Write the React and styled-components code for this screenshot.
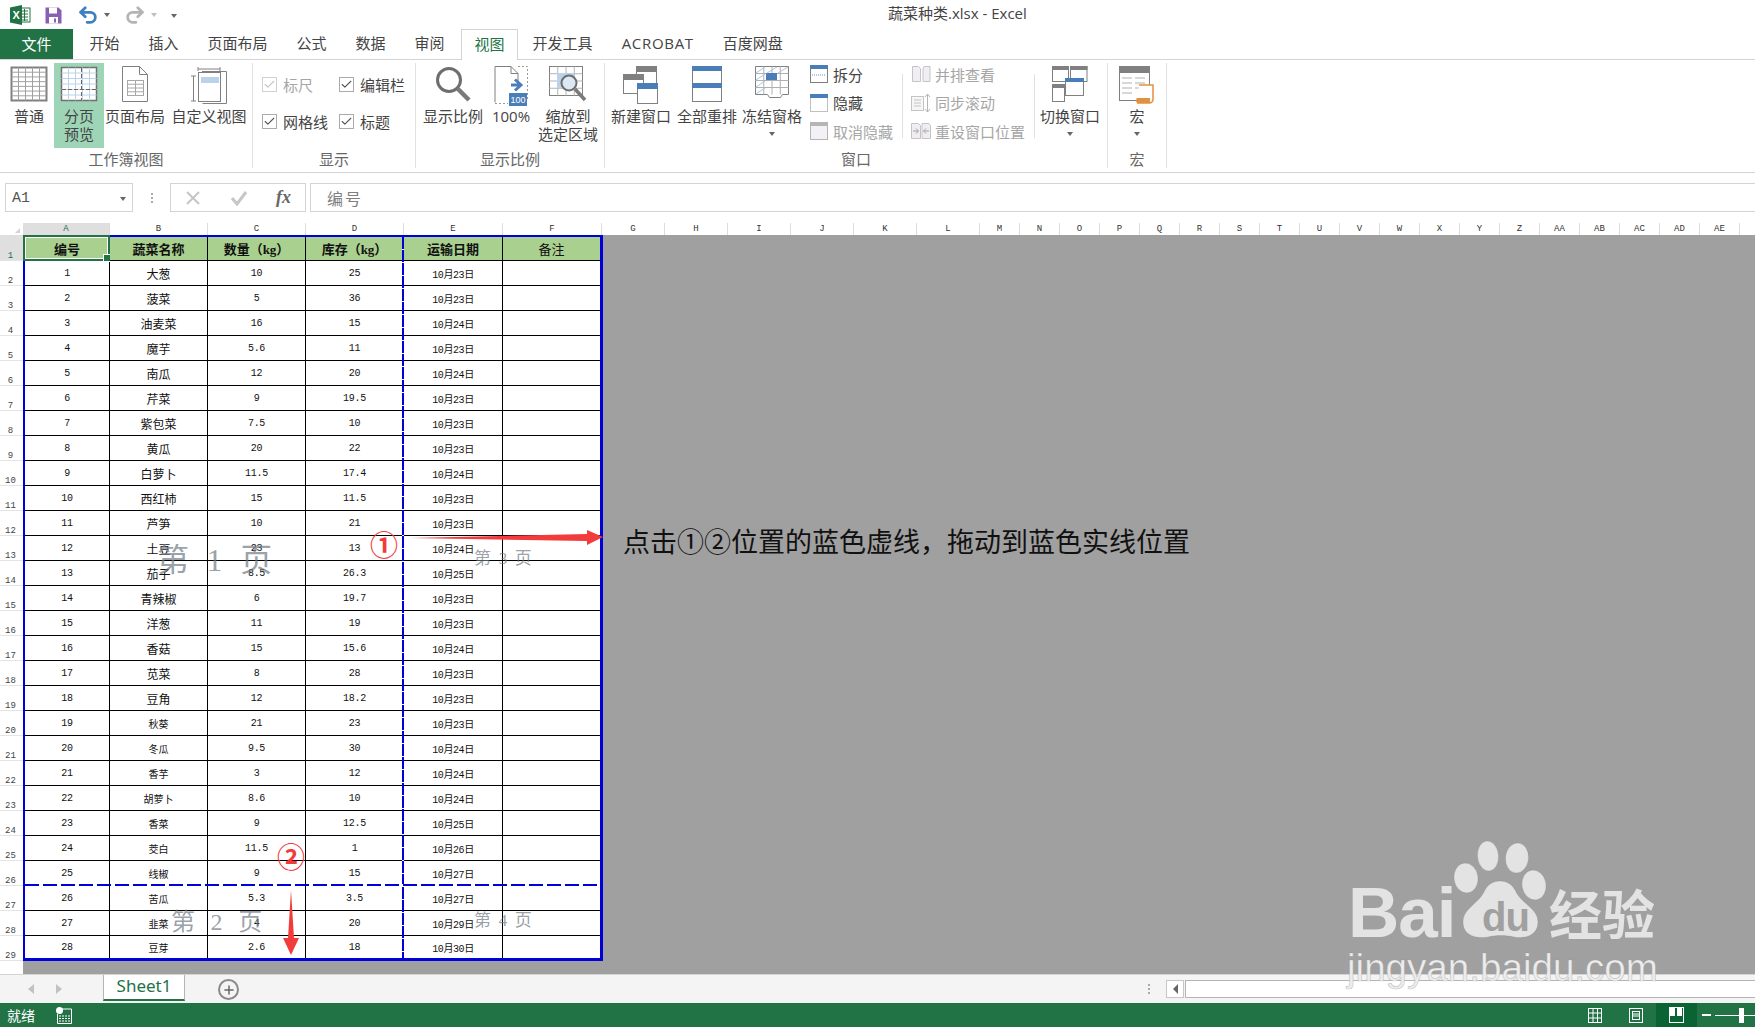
import React from "react";
import styled, { createGlobalStyle } from "styled-components";
import { Undo2, Redo2, Check, Plus } from "lucide-react";

const SANS = `"Open Sans", "Noto Sans CJK SC", sans-serif`;
const CJK = `"Noto Sans CJK SC", sans-serif`;
const GREEN = "#217346";
const BLUE = "#0000d8";

const Global = createGlobalStyle`
  html, body { margin: 0; padding: 0; background: #fff; }
  * { box-sizing: border-box; }
`;

const Page = styled.div`
  position: relative;
  width: 1755px;
  height: 1027px;
  overflow: hidden;
  display: flex;
  flex-direction: column;
  font-family: ${SANS};
  background: #fff;
`;

/* title bar */
const TitleBar = styled.div`
  height: 29px;
  display: flex;
  align-items: center;
  padding-left: 10px;
`;
const QuickAccess = styled.div`
  width: 878px;
  display: flex;
  align-items: center;
`;
const Spacer = styled.span`
  width: ${p => p.$width}px;
  flex: none;
`;
const Title = styled.div`
  font-size: 15px;
  color: #444;
  padding-bottom: 4px;
`;
const Caret = styled.span`
  width: 0;
  height: 0;
  margin: ${p => p.$margin || "0"};
  border-left: 3.5px solid transparent;
  border-right: 3.5px solid transparent;
  border-top: 4px solid ${p => p.$color || "#666"};
`;

/* tabs */
const TabBar = styled.div`
  height: 31px;
  display: flex;
  border-bottom: 1px solid #d4d4d4;
`;
const FileTab = styled.div`
  width: 73px;
  height: 30px;
  margin-right: 2px;
  padding-bottom: 2px;
  background: ${GREEN};
  color: #fff;
  font-size: 15px;
  display: flex;
  align-items: center;
  justify-content: center;
`;
const Tab = styled.div`
  height: ${p => (p.$active ? "31px" : "30px")};
  padding: 0 ${p => (p.$active ? "12.5px" : "14.5px")};
  margin-left: ${p => (p.$active ? "2px" : "0")};
  font-size: 15px;
  line-height: 28px;
  letter-spacing: ${p => (p.$wide ? "0.7px" : "0")};
  color: ${p => (p.$active ? GREEN : "#444")};
  background: #fff;
  white-space: nowrap;
  border: ${p => (p.$active ? "1px solid #d4d4d4" : "none")};
  border-bottom: none;
`;

/* ribbon */
const Ribbon = styled.div`
  height: 113px;
  display: flex;
  align-items: flex-start;
  border-bottom: 1px solid #d4d4d4;
  padding-top: 3px;
`;
const Group = styled.div`
  width: ${p => p.$width}px;
  height: 105px;
  display: flex;
  flex-direction: column;
  border-right: 1px solid #e1e1e1;
`;
const GroupBody = styled.div`
  height: 88px;
  display: flex;
  padding-left: ${p => p.$left || 0}px;
`;
const GroupLabel = styled.div`
  height: 18px;
  margin-top: 1px;
  line-height: 18px;
  text-align: center;
  font-size: 15px;
  color: #666;
  white-space: nowrap;
`;
const BigButton = styled.div`
  width: ${p => p.$width}px;
  height: 85px;
  margin-left: ${p => p.$gap || 0}px;
  display: flex;
  flex-direction: column;
  align-items: center;
  background: ${p => (p.$active ? "#9fd5b7" : "transparent")};
`;
const BigIcon = styled.div`
  height: 44px;
  padding-top: 3px;
  display: flex;
  align-items: flex-start;
  justify-content: center;
`;
const BigLabel = styled.div`
  font-size: 15px;
  line-height: 18px;
  color: #444;
  text-align: center;
  white-space: nowrap;
`;
const DownArrow = styled.span`
  display: block;
  width: 0;
  height: 0;
  margin-top: 7px;
  border-left: 3.5px solid transparent;
  border-right: 3.5px solid transparent;
  border-top: 4px solid #666;
`;
const CheckGrid = styled.div`
  display: grid;
  grid-template-columns: 77px 77px;
  grid-auto-rows: 37px;
  padding: 3px 0 0 9px;
`;
const CheckItem = styled.div`
  display: flex;
  align-items: center;
  font-size: 15px;
  color: ${p => (p.$disabled ? "#a6a6a6" : "#444")};
`;
const CheckBox = styled.span`
  width: 15px;
  height: 15px;
  margin-right: 6px;
  display: flex;
  align-items: center;
  justify-content: center;
  border: 1px solid ${p => (p.$disabled ? "#d0d0d0" : "#ababab")};
  color: ${p => (p.$disabled ? "#c4c4c4" : "#555")};
`;
const SmallColumn = styled.div`
  width: ${p => p.$width}px;
  margin: -3px 0 0 ${p => p.$left || 0}px;
  display: flex;
  flex-direction: column;
`;
const SmallItem = styled.div`
  height: 28.5px;
  display: flex;
  align-items: center;
  gap: ${p => p.$gap || 5}px;
  font-size: 15px;
  white-space: nowrap;
  color: ${p => (p.$disabled ? "#a6a6a6" : "#444")};
`;
const Divider = styled.div`
  width: 1px;
  height: 64px;
  margin: 11px 0 0 0;
  background: #e1e1e1;
`;

/* formula bar */
const FormulaBar = styled.div`
  height: 39px;
  padding: 10px 0 0 5px;
  display: flex;
`;
const NameBox = styled.div`
  width: 128px;
  height: 29px;
  border: 1px solid #d4d4d4;
  padding: 2px 6px 0;
  display: flex;
  align-items: center;
  justify-content: space-between;
  font: 15px "Liberation Mono", monospace;
  color: #555;
`;
const GripDots = styled.div`
  width: 37px;
  display: flex;
  flex-direction: column;
  align-items: center;
  justify-content: center;
  gap: 2px;
  span {
    width: 2px;
    height: 2px;
    background: #aaa;
  }
`;
const FnBox = styled.div`
  width: 136px;
  height: 29px;
  border: 1px solid #d4d4d4;
  display: flex;
  align-items: center;
  justify-content: space-between;
  padding: 0 14px;
  color: #c6c6c6;
`;
const FnLabel = styled.span`
  font: italic bold 18px "Liberation Serif", serif;
  color: #666;
`;
const FormulaInput = styled.div`
  flex: 1;
  height: 29px;
  margin-left: 4px;
  border: 1px solid #d4d4d4;
  border-right: none;
  padding-left: 16px;
  line-height: 29px;
  font-size: 16px;
  letter-spacing: 2px;
  color: #808080;
  font-family: ${CJK};
`;

/* sheet */
const ColumnStrip = styled.div`
  height: 23px;
  padding-top: 11px;
  display: flex;
  overflow: hidden;
`;
const Corner = styled.div`
  position: relative;
  width: 23px;
  flex: none;
  &::after {
    content: "";
    position: absolute;
    right: 3px;
    bottom: 2px;
    border-left: 5px solid transparent;
    border-bottom: 5px solid #d4d4d4;
  }
`;
const ColumnHead = styled.div`
  width: ${p => p.$width}px;
  flex: none;
  border-right: 1px solid #dcdcdc;
  background: ${p => (p.$active ? "#dfdfdf" : "#fff")};
  color: ${p => (p.$active ? GREEN : "#333")};
  font: 9px/12px "Liberation Mono", monospace;
  text-align: center;
`;
const SheetRegion = styled.div`
  height: 739px;
  display: flex;
`;
const RowStrip = styled.div`
  width: 23px;
  flex: none;
  background: #fff;
`;
const RowHead = styled.div`
  height: ${p => (p.$first ? 26 : 25)}px;
  border-bottom: 1px solid #e4e4e4;
  background: ${p => (p.$active ? "#dfdfdf" : "#fff")};
  color: ${p => (p.$active ? GREEN : "#444")};
  font: 9px/8px "Liberation Mono", monospace;
  text-align: center;
  display: flex;
  align-items: flex-end;
  justify-content: center;
  padding: 0 2px 0 0;
`;
const GrayArea = styled.div`
  flex: 1;
  background: #a0a0a0;
  align-self: stretch;
`;
const SheetPage = styled.div`
  position: relative;
  width: 580px;
  border: 2px solid ${BLUE};
  border-right-width: 3px;
  border-bottom-width: 3px;
  display: grid;
  grid-template-columns: 85px 98px 98px 98px 99px 97px;
  grid-template-rows: 24px repeat(27, 25px) 22px;
  background: #fff;
`;
const Cell = styled.div`
  display: flex;
  align-items: center;
  justify-content: center;
  border-right: ${p => (p.$last ? "none" : "1px solid #000")};
  border-bottom: ${p => (p.$bottom ? "none" : "1px solid #000")};
  color: #111;
  white-space: nowrap;
  font-family: "Liberation Mono", ${CJK}, monospace;
  font-size: 10px;
  letter-spacing: -0.3px;
`;
const HeadCell = styled(Cell)`
  position: relative;
  background: #a9d08e;
  font-family: "Liberation Serif", ${CJK}, serif;
  font-size: 13px;
  letter-spacing: 0;
  font-weight: ${p => (p.$plain ? 400 : 700)};
`;
const NameCell = styled(Cell)`
  font-family: ${CJK};
  letter-spacing: 0;
  font-size: ${p => (p.$small ? 10 : 12)}px;
`;
const DateCell = styled(Cell)`
  font-family: "Liberation Mono", ${CJK}, monospace;
  font-size: 10px;
  letter-spacing: -0.4px;
`;
const ActiveCell = styled.div`
  position: absolute;
  left: -2px;
  top: -2px;
  right: -1px;
  bottom: -1px;
  border: 2px solid ${GREEN};
  outline: 1px solid #fff;
  outline-offset: -3px;
  &::after {
    content: "";
    position: absolute;
    right: -3px;
    bottom: -3px;
    width: 6px;
    height: 6px;
    background: ${GREEN};
    border: 1px solid #fff;
  }
`;
const BreakV = styled.div`
  position: absolute;
  left: 377px;
  top: 0;
  bottom: 0;
  width: 2px;
  background: repeating-linear-gradient(180deg, ${BLUE} 0 12px, #fff 12px 13px);
`;
const BreakH = styled.div`
  position: absolute;
  left: 0;
  right: 0;
  top: 647px;
  height: 2px;
  background: repeating-linear-gradient(90deg, ${BLUE} 0 14px, #fff 14px 18px);
`;
const PageMark = styled.div`
  position: absolute;
  left: ${p => p.$x}px;
  top: ${p => p.$y}px;
  font-family: "Liberation Serif", ${CJK}, serif;
  font-size: ${p => p.$size}px;
  line-height: 1;
  word-spacing: ${p => p.$spread}em;
  white-space: nowrap;
  color: rgba(110, 120, 130, 0.7);
`;

/* annotation layer */
const CircleMark = styled.div`
  position: absolute;
  left: ${p => p.$x}px;
  top: ${p => p.$y}px;
  font-family: ${CJK};
  font-size: 28px;
  font-weight: 700;
  line-height: 28px;
  color: #f23c3c;
`;
const Overlay = styled.svg`
  position: absolute;
  left: 0;
  top: 0;
  pointer-events: none;
`;
const Note = styled.div`
  position: absolute;
  left: 623px;
  top: 521px;
  font-family: ${CJK};
  font-size: 27px;
  line-height: 40px;
  color: #111;
  white-space: nowrap;
`;

/* bottom */
const TabStrip = styled.div`
  height: 29px;
  display: flex;
  background: #f4f4f4;
  border-top: 1px solid #d4d4d4;
`;
const NavArrows = styled.div`
  width: 103px;
  display: flex;
  align-items: center;
  gap: 22px;
  padding-left: 28px;
`;
const NavArrow = styled.span`
  width: 0;
  height: 0;
  border-top: 5px solid transparent;
  border-bottom: 5px solid transparent;
  ${p => (p.$left ? "border-right" : "border-left")}: 6px solid #c2c2c2;
`;
const SheetTab = styled.div`
  width: 82px;
  height: 26px;
  background: #fff;
  border: 1px solid #b5b5b5;
  border-top: none;
  border-bottom: 2px solid ${GREEN};
  color: ${GREEN};
  font: 17px/22px "Noto Sans", sans-serif;
  text-align: center;
`;
const AddSheet = styled.div`
  width: 21px;
  height: 21px;
  margin: 4px 0 0 33px;
  border: 2px solid #8a8a8a;
  border-radius: 50%;
  display: flex;
  align-items: center;
  justify-content: center;
  color: #666;
`;
const ScrollGrip = styled(GripDots)`
  width: 10px;
  margin-left: auto;
`;
const ScrollArea = styled.div`
  width: 601px;
  margin: 5px 0 0 0;
  height: 18px;
  display: flex;
  padding-left: 12px;
`;
const ScrollButton = styled.div`
  width: 18px;
  height: 18px;
  background: #fff;
  border: 1px solid #c6c6c6;
  display: flex;
  align-items: center;
  justify-content: center;
  &::before {
    content: "";
    border-top: 5px solid transparent;
    border-bottom: 5px solid transparent;
    border-right: 5px solid #666;
  }
`;
const ScrollTrack = styled.div`
  flex: 1;
  margin-left: 1px;
  background: #fff;
  border: 1px solid #b5b5b5;
  border-right: none;
`;
const StatusBar = styled.div`
  height: 24px;
  display: flex;
  align-items: center;
  background: ${GREEN};
  color: #fff;
  font-size: 14px;
  padding-left: 7px;
`;
const StatusIcons = styled.div`
  margin-left: auto;
  display: flex;
  align-items: center;
  height: 100%;
`;
const ViewButton = styled.div`
  width: 41px;
  height: 100%;
  display: flex;
  align-items: center;
  justify-content: center;
  background: ${p => (p.$active ? "#0a6332" : "transparent")};
`;
const ZoomSlider = styled.div`
  position: relative;
  width: 58px;
  height: 100%;
  &::before {
    content: "";
    position: absolute;
    left: 5px;
    top: 11px;
    width: 9px;
    height: 2px;
    background: #fff;
  }
  &::after {
    content: "";
    position: absolute;
    left: 18px;
    right: 0;
    top: 12px;
    height: 1px;
    background: #fff;
  }
`;
const ZoomThumb = styled.span`
  position: absolute;
  left: 42px;
  top: 5px;
  width: 5px;
  height: 15px;
  background: #fff;
`;

/* icons */
const Gridlines = ({ x, y, w, h, cols, rows, color }) => (
  <g stroke={color} strokeWidth="1" fill="none">
    {Array.from({ length: cols - 1 }, (_, i) => {
      const px = x + ((i + 1) * w) / cols;
      return <line key={"c" + i} x1={px} x2={px} y1={y} y2={y + h} />;
    })}
    {Array.from({ length: rows - 1 }, (_, i) => {
      const py = y + ((i + 1) * h) / rows;
      return <line key={"r" + i} x1={x} x2={x + w} y1={py} y2={py} />;
    })}
  </g>
);

const ExcelLogo = () => (
  <svg width="21" height="20" viewBox="0 0 21 20">
    <rect x="9" y="3" width="11" height="14" fill="#fff" stroke={GREEN} />
    <path d="M11 6h7M11 9h7M11 12h7M11 15h7M14.5 4v12" stroke={GREEN} />
    <path d="M0 2.5 L12 0 V20 L0 17.5Z" fill={GREEN} />
    <text x="2.5" y="14" fontFamily="Liberation Sans" fontWeight="700" fontSize="11" fill="#fff">X</text>
  </svg>
);
const SaveIcon = () => (
  <svg width="17" height="18" viewBox="0 0 17 18">
    <path d="M0.5 1.5h13l3 3v13h-16z" fill="#8a5fb0" />
    <rect x="4" y="1.5" width="8" height="6" fill="#fff" />
    <rect x="4" y="11" width="9" height="6.5" fill="#fff" />
    <rect x="9" y="12.5" width="2" height="4" fill="#8a5fb0" />
  </svg>
);
const NormalIcon = () => (
  <svg width="38" height="36" viewBox="0 0 38 36">
    <rect x="1.5" y="1.5" width="35" height="33" fill="#fff" stroke="#808080" strokeWidth="2" />
    <Gridlines x={1.5} y={1.5} w={35} h={33} cols={5} rows={7} color="#a0a0a0" />
  </svg>
);
const BreakPreviewIcon = () => (
  <svg width="38" height="36" viewBox="0 0 38 36">
    <rect x="1.5" y="1.5" width="35" height="33" fill="#fff" stroke="#707070" strokeWidth="1.5" />
    <Gridlines x={1.5} y={1.5} w={35} h={33} cols={5} rows={6} color="#bcd2ea" />
    <path d="M21.5 2v32M2 23.5h34" stroke="#666" strokeDasharray="4 2" fill="none" />
  </svg>
);
const PageLayoutIcon = () => (
  <svg width="26" height="36" viewBox="0 0 26 36">
    <path d="M0.5 0.5h17l8 8v27h-25z" fill="#fff" stroke="#808080" />
    <path d="M17.5 0.5v8h8" fill="none" stroke="#808080" />
    <rect x="5.5" y="14.5" width="16" height="15" fill="none" stroke="#a8a8a8" />
    <Gridlines x={5.5} y={14.5} w={16} h={15} cols={2} rows={4} color="#a8a8a8" />
  </svg>
);
const CustomViewIcon = () => (
  <svg width="38" height="38" viewBox="0 0 38 38">
    <path d="M8 1v4M30 1v4M8 3h22M1 10h5M1 35h5M3.5 10v25" stroke="#808080" fill="none" />
    <rect x="8.5" y="6.5" width="22" height="29" fill="#fff" stroke="#808080" />
    <path d="M12 5.5h24.5v32h-24" fill="none" stroke="#808080" />
    <rect x="11" y="11" width="18" height="6" fill="#bcd2ea" />
  </svg>
);
const MagnifierIcon = () => (
  <svg width="36" height="36" viewBox="0 0 36 36">
    <circle cx="14" cy="14" r="11.5" fill="none" stroke="#6e6e6e" strokeWidth="3" />
    <path d="M23 23L34 34" stroke="#7a7a7a" strokeWidth="4.5" />
  </svg>
);
const HundredIcon = () => (
  <svg width="34" height="40" viewBox="0 0 34 40">
    <path d="M24 0.5h9.5v33" fill="none" stroke="#999" strokeDasharray="2 2" />
    <path d="M1 36.5V0.5h16l7 7v13" fill="none" stroke="#808080" />
    <path d="M1 37.5h13" fill="none" stroke="#999" strokeDasharray="2 2" />
    <path d="M17 0.5v7h7" fill="none" stroke="#808080" />
    <path d="M17 19h8M21 13.5l6 5.5-6 5.5" stroke="#4a7eb8" strokeWidth="3" fill="none" />
    <rect x="15" y="27" width="18" height="13" fill="#4a7eb8" />
    <text x="24" y="37" textAnchor="middle" fontFamily="Liberation Sans" fontSize="9" fill="#fff">100</text>
  </svg>
);
const ZoomSelectionIcon = () => (
  <svg width="38" height="36" viewBox="0 0 38 36">
    <rect x="0.5" y="0.5" width="33" height="29" fill="#fff" stroke="#808080" />
    <Gridlines x={0.5} y={0.5} w={33} h={29} cols={4} rows={4} color="#b5b5b5" />
    <rect x="8" y="7" width="17" height="15" fill="#bcd2ea" />
    <circle cx="20" cy="17" r="7.5" fill="#dce8f4" stroke="#6e6e6e" strokeWidth="2" />
    <path d="M26 23L36 34" stroke="#7a7a7a" strokeWidth="3.5" />
  </svg>
);
const NewWindowIcon = () => (
  <svg width="36" height="38" viewBox="0 0 36 38">
    <rect x="13.5" y="0.5" width="20" height="19" fill="#fff" stroke="#808080" />
    <rect x="13" y="0" width="21" height="6" fill="#808080" />
    <rect x="0.5" y="8.5" width="20" height="19" fill="#fff" stroke="#808080" />
    <rect x="0" y="8" width="21" height="6" fill="#808080" />
    <rect x="14.5" y="17.5" width="20" height="20" fill="#fff" stroke="#808080" />
    <rect x="14" y="17" width="21" height="6" fill="#4a7eb8" />
  </svg>
);
const ArrangeIcon = () => (
  <svg width="30" height="36" viewBox="0 0 30 36">
    <rect x="0.5" y="0.5" width="29" height="35" fill="#fff" stroke="#808080" />
    <rect x="0" y="0" width="30" height="5" fill="#4a7eb8" />
    <rect x="0" y="17" width="30" height="5" fill="#4a7eb8" />
  </svg>
);
const FreezeIcon = () => (
  <svg width="34" height="32" viewBox="0 0 34 32">
    <path d="M0.5 0.5h33v28l-6 0-2 3h-11l-2-3h-12z" fill="#fff" stroke="#808080" />
    <Gridlines x={0.5} y={0.5} w={33} h={28} cols={4} rows={4} color="#b0b0b0" />
    <rect x="11" y="7" width="11" height="7" fill="#4a7eb8" />
    <path d="M1 7L10 1M12 7L22 1M23 7L33 1M1 14L10 8M1 21L10 15M1 28L10 22" stroke="#a9c6e4" />
  </svg>
);
const SplitIcon = () => (
  <svg width="18" height="18" viewBox="0 0 18 18">
    <rect x="0.5" y="0.5" width="17" height="17" fill="#fff" stroke="#808080" />
    <rect width="18" height="4" fill="#4a7eb8" />
    <path d="M2 10h14" stroke="#6a8fb8" strokeDasharray="1 1" />
  </svg>
);
const HideIcon = () => (
  <svg width="18" height="18" viewBox="0 0 18 18">
    <rect x="0.5" y="0.5" width="17" height="17" fill="none" stroke="#808080" strokeDasharray="1 1" />
    <rect width="18" height="4" fill="#4a7eb8" />
  </svg>
);
const UnhideIcon = () => (
  <svg width="18" height="18" viewBox="0 0 18 18">
    <rect x="0.5" y="0.5" width="17" height="17" fill="#f3f1f5" stroke="#b5b5b5" />
    <rect width="18" height="4" fill="#b5b5b5" />
  </svg>
);
const SideBySideIcon = () => (
  <svg width="20" height="16" viewBox="0 0 20 16">
    <path d="M1.5 0.5h6l2 2v13h-8zM12 2.5l1-2h6v15h-7z" fill="#f0eef2" stroke="#c4c4c4" />
  </svg>
);
const SyncScrollIcon = () => (
  <svg width="20" height="20" viewBox="0 0 20 20">
    <rect x="0.5" y="3.5" width="12" height="14" fill="#f6f6f6" stroke="#c4c4c4" />
    <path d="M3 7h7M3 10h7M3 13h7" stroke="#c4c4c4" />
    <path d="M16.5 1v18M14 4l2.5-3 2.5 3M14 16l2.5 3 2.5-3" stroke="#b5b5b5" fill="none" />
  </svg>
);
const ResetIcon = () => (
  <svg width="20" height="16" viewBox="0 0 20 16">
    <path d="M0.5 0.5h7l2 2v13h-9zM11 0.5h7l1.5 2v13H11z" fill="#f0eef2" stroke="#c4c4c4" />
    <path d="M2 8h5M5 5.5l2.5 2.5L5 10.5M18 8h-5M15 5.5L12.5 8l2.5 2.5" stroke="#a0a0a0" fill="none" />
  </svg>
);
const SwitchIcon = () => (
  <svg width="36" height="36" viewBox="0 0 36 36">
    <rect x="0.5" y="0.5" width="16" height="15" fill="#fff" stroke="#808080" />
    <rect width="17" height="4" fill="#808080" />
    <rect x="18.5" y="0.5" width="16.5" height="15" fill="#fff" stroke="#808080" />
    <rect x="18" width="17.5" height="4" fill="#808080" />
    <rect x="0.5" y="18.5" width="12" height="17" fill="#fff" stroke="#808080" />
    <rect y="18" width="13" height="4" fill="#808080" />
    <rect x="13.5" y="12.5" width="18" height="17" fill="#fff" stroke="#808080" />
    <rect x="13" y="12" width="19" height="4" fill="#4a7eb8" />
  </svg>
);
const MacroIcon = () => (
  <svg width="36" height="38" viewBox="0 0 36 38">
    <rect x="0.5" y="0.5" width="30" height="34" fill="#fff" stroke="#808080" />
    <rect width="31" height="7" fill="#808080" />
    <path d="M3 12h10M16 12h10M3 17h10M16 17h10M3 22h10M16 22h10M3 27h10" stroke="#b0b0b0" />
    <path d="M20 19h14v14q0 4-4 4h-12" fill="#fff" stroke="#e2913f" strokeWidth="1.5" />
    <path d="M18 32h13v5h-13q-2-2.5 0-5z" fill="#e2913f" />
  </svg>
);
const SheetStatusIcon = () => (
  <svg width="16" height="17" viewBox="0 0 16 17">
    <circle cx="3.5" cy="3.5" r="3.5" fill="#fff" />
    <path d="M5 2h10.5v14.5H1.5V7" fill="none" stroke="#fff" />
    <path d="M3 9h11M3 11.5h11M3 14h11" stroke="#fff" strokeDasharray="2 1" />
  </svg>
);
const NormalViewIcon = () => (
  <svg width="14" height="15" viewBox="0 0 14 15">
    <rect x="0.5" y="0.5" width="13" height="14" fill="none" stroke="#fff" />
    <path d="M5 0v15M9.5 0v15M0 5h14M0 10h14" stroke="#fff" />
  </svg>
);
const LayoutViewIcon = () => (
  <svg width="14" height="15" viewBox="0 0 14 15">
    <rect x="0.5" y="0.5" width="13" height="14" fill="none" stroke="#fff" />
    <rect x="3.5" y="3.5" width="7" height="8" fill="none" stroke="#fff" />
    <path d="M4 6h6M4 8h6" stroke="#fff" />
  </svg>
);
const BreakViewIcon = () => (
  <svg width="15" height="16" viewBox="0 0 15 16">
    <rect x="0.5" y="0.5" width="14" height="15" fill="none" stroke="#fff" />
    <path d="M1 0h5v9H1zM8 0h5v9H8z" fill="#fff" />
  </svg>
);

/* data */
const COLUMNS = [
  ["A", 87], ["B", 98], ["C", 98], ["D", 98], ["E", 99], ["F", 99],
  ["G", 63], ["H", 63], ["I", 63], ["J", 63], ["K", 63], ["L", 63],
  ...["M", "N", "O", "P", "Q", "R", "S", "T", "U", "V", "W", "X", "Y", "Z", "AA", "AB", "AC", "AD", "AE"].map(c => [c, 40])
];

const ROWS = [
  ["大葱", "10", "25", "10月23日"],
  ["菠菜", "5", "36", "10月23日"],
  ["油麦菜", "16", "15", "10月24日"],
  ["魔芋", "5.6", "11", "10月23日"],
  ["南瓜", "12", "20", "10月24日"],
  ["芹菜", "9", "19.5", "10月23日"],
  ["紫包菜", "7.5", "10", "10月23日"],
  ["黄瓜", "20", "22", "10月23日"],
  ["白萝卜", "11.5", "17.4", "10月24日"],
  ["西红柿", "15", "11.5", "10月23日"],
  ["芦笋", "10", "21", "10月23日"],
  ["土豆", "23", "13", "10月24日"],
  ["茄子", "8.5", "26.3", "10月25日"],
  ["青辣椒", "6", "19.7", "10月23日"],
  ["洋葱", "11", "19", "10月23日"],
  ["香菇", "15", "15.6", "10月24日"],
  ["苋菜", "8", "28", "10月23日"],
  ["豆角", "12", "18.2", "10月23日"],
  ["秋葵", "21", "23", "10月23日"],
  ["冬瓜", "9.5", "30", "10月24日"],
  ["香芋", "3", "12", "10月24日"],
  ["胡萝卜", "8.6", "10", "10月24日"],
  ["香菜", "9", "12.5", "10月25日"],
  ["茭白", "11.5", "1", "10月26日"],
  ["线椒", "9", "15", "10月27日"],
  ["苦瓜", "5.3", "3.5", "10月27日"],
  ["韭菜", "4", "20", "10月29日"],
  ["豆芽", "2.6", "18", "10月30日"]
];

const TABS = ["开始", "插入", "页面布局", "公式", "数据", "审阅", "视图", "开发工具", "ACROBAT", "百度网盘"];

const CheckOption = ({ label, disabled }) => (
  <CheckItem $disabled={disabled}>
    <CheckBox $disabled={disabled}>
      <Check size={13} strokeWidth={2} />
    </CheckBox>
    {label}
  </CheckItem>
);

const LargeButton = ({ width, gap, active, icon, lines, arrow }) => (
  <BigButton $width={width} $gap={gap} $active={active}>
    <BigIcon>{icon}</BigIcon>
    {lines.map(line => (
      <BigLabel key={line}>{line}</BigLabel>
    ))}
    {arrow && <DownArrow />}
  </BigButton>
);

const App = () => (
  <Page>
    <Global />
    <TitleBar>
      <QuickAccess>
        <ExcelLogo />
        <Spacer $width={14} />
        <SaveIcon />
        <Spacer $width={15} />
        <Undo2 size={22} color="#3f7fbf" strokeWidth={3} />
        <Caret $margin="0 0 0 5px" />
        <Spacer $width={14} />
        <Redo2 size={22} color="#b4b4b4" strokeWidth={3} />
        <Caret $margin="0 0 0 5px" $color="#c0c0c0" />
        <Caret $margin="2px 0 0 14px" />
      </QuickAccess>
      <Title>蔬菜种类.xlsx - Excel</Title>
    </TitleBar>

    <TabBar>
      <FileTab>文件</FileTab>
      {TABS.map(t => (
        <Tab key={t} $active={t === "视图"} $wide={t === "ACROBAT"}>{t}</Tab>
      ))}
    </TabBar>

    <Ribbon>
      <Group $width={253}>
        <GroupBody $left={4}>
          <LargeButton width={50} icon={<NormalIcon />} lines={["普通"]} />
          <LargeButton width={50} active icon={<BreakPreviewIcon />} lines={["分页", "预览"]} />
          <LargeButton width={62} icon={<PageLayoutIcon />} lines={["页面布局"]} />
          <LargeButton width={76} gap={5} icon={<CustomViewIcon />} lines={["自定义视图"]} />
        </GroupBody>
        <GroupLabel>工作簿视图</GroupLabel>
      </Group>
      <Group $width={163}>
        <GroupBody>
          <CheckGrid>
            <CheckOption label="标尺" disabled />
            <CheckOption label="编辑栏" />
            <CheckOption label="网格线" />
            <CheckOption label="标题" />
          </CheckGrid>
        </GroupBody>
        <GroupLabel>显示</GroupLabel>
      </Group>
      <Group $width={189}>
        <GroupBody $left={5}>
          <LargeButton width={64} icon={<MagnifierIcon />} lines={["显示比例"]} />
          <LargeButton width={52} icon={<HundredIcon />} lines={["100%"]} />
          <LargeButton width={62} icon={<ZoomSelectionIcon />} lines={["缩放到", "选定区域"]} />
        </GroupBody>
        <GroupLabel>显示比例</GroupLabel>
      </Group>
      <Group $width={503}>
        <GroupBody $left={3}>
          <LargeButton width={66} icon={<NewWindowIcon />} lines={["新建窗口"]} />
          <LargeButton width={66} icon={<ArrangeIcon />} lines={["全部重排"]} />
          <LargeButton width={64} icon={<FreezeIcon />} lines={["冻结窗格"]} arrow />
          <SmallColumn $width={92} $left={6}>
            <SmallItem><SplitIcon />拆分</SmallItem>
            <SmallItem><HideIcon />隐藏</SmallItem>
            <SmallItem $disabled><UnhideIcon />取消隐藏</SmallItem>
          </SmallColumn>
          <Divider />
          <SmallColumn $width={123} $left={8}>
            <SmallItem $disabled $gap={4}><SideBySideIcon />并排查看</SmallItem>
            <SmallItem $disabled $gap={4}><SyncScrollIcon />同步滚动</SmallItem>
            <SmallItem $disabled $gap={4}><ResetIcon />重设窗口位置</SmallItem>
          </SmallColumn>
          <Divider />
          <LargeButton width={70} icon={<SwitchIcon />} lines={["切换窗口"]} arrow />
        </GroupBody>
        <GroupLabel>窗口</GroupLabel>
      </Group>
      <Group $width={59}>
        <GroupBody>
          <LargeButton width={58} icon={<MacroIcon />} lines={["宏"]} arrow />
        </GroupBody>
        <GroupLabel>宏</GroupLabel>
      </Group>
    </Ribbon>

    <FormulaBar>
      <NameBox>
        A1
        <Caret />
      </NameBox>
      <GripDots>
        <span />
        <span />
        <span />
      </GripDots>
      <FnBox>
        <svg width="16" height="16" viewBox="0 0 16 16">
          <path d="M2 2l12 12M14 2L2 14" stroke="#c6c6c6" strokeWidth="2" />
        </svg>
        <svg width="18" height="16" viewBox="0 0 18 16">
          <path d="M2 8l5 6L16 2" stroke="#c6c6c6" strokeWidth="3" fill="none" />
        </svg>
        <FnLabel>fx</FnLabel>
      </FnBox>
      <FormulaInput>编号</FormulaInput>
    </FormulaBar>

    <ColumnStrip>
      <Corner />
      {COLUMNS.map(([name, width]) => (
        <ColumnHead key={name} $width={width} $active={name === "A"}>{name}</ColumnHead>
      ))}
    </ColumnStrip>

    <SheetRegion>
      <RowStrip>
        {Array.from({ length: 29 }, (_, i) => (
          <RowHead key={i} $first={i === 0} $active={i === 0}>{i + 1}</RowHead>
        ))}
      </RowStrip>
      <GrayArea>
        <SheetPage>
          <HeadCell>
            编号
            <ActiveCell />
          </HeadCell>
          <HeadCell>蔬菜名称</HeadCell>
          <HeadCell>数量（kg）</HeadCell>
          <HeadCell>库存（kg）</HeadCell>
          <HeadCell>运输日期</HeadCell>
          <HeadCell $last $plain>备注</HeadCell>
          {ROWS.map((row, i) => {
            const bottom = i === ROWS.length - 1;
            return (
              <React.Fragment key={row[0]}>
                <Cell $bottom={bottom}>{i + 1}</Cell>
                <NameCell $bottom={bottom} $small={i >= 18}>{row[0]}</NameCell>
                <Cell $bottom={bottom}>{row[1]}</Cell>
                <Cell $bottom={bottom}>{row[2]}</Cell>
                <DateCell $bottom={bottom}>{row[3]}</DateCell>
                <Cell $bottom={bottom} $last />
              </React.Fragment>
            );
          })}
          <BreakV />
          <BreakH />
          <PageMark $x={132} $y={307} $size={32} $spread={0.3}>第 1 页</PageMark>
          <PageMark $x={449} $y={313} $size={17} $spread={0.2}>第 3 页</PageMark>
          <PageMark $x={146} $y={673} $size={24} $spread={0.4}>第 2 页</PageMark>
          <PageMark $x={449} $y={675} $size={17} $spread={0.2}>第 4 页</PageMark>
        </SheetPage>
      </GrayArea>
    </SheetRegion>

    <TabStrip>
      <NavArrows>
        <NavArrow $left />
        <NavArrow />
      </NavArrows>
      <SheetTab>Sheet1</SheetTab>
      <AddSheet>
        <Plus size={14} strokeWidth={2.5} />
      </AddSheet>
      <ScrollGrip>
        <span />
        <span />
        <span />
      </ScrollGrip>
      <ScrollArea>
        <ScrollButton />
        <ScrollTrack />
      </ScrollArea>
    </TabStrip>

    <StatusBar>
      就绪
      <Spacer $width={21} />
      <SheetStatusIcon />
      <StatusIcons>
        <ViewButton><NormalViewIcon /></ViewButton>
        <ViewButton><LayoutViewIcon /></ViewButton>
        <ViewButton $active><BreakViewIcon /></ViewButton>
        <ZoomSlider>
          <ZoomThumb />
        </ZoomSlider>
      </StatusIcons>
    </StatusBar>

    <CircleMark $x={370} $y={530}>①</CircleMark>
    <CircleMark $x={277} $y={842}>②</CircleMark>
    <Note>点击①②位置的蓝色虚线，拖动到蓝色实线位置</Note>

    <Overlay width="1755" height="1027" viewBox="0 0 1755 1027">
      <path d="M410 538 L587 534 V530 L603 537 L587 545 V541Z" fill="#f23c3c" />
      <path d="M291 890 L294 938 H299 L291 955 L283 938 H288Z" fill="#f23c3c" />
      <g fill="#e3e3e3" stroke="rgba(110,110,110,0.35)" strokeWidth="0.6">
        <ellipse cx="1466" cy="878" rx="12" ry="15" transform="rotate(-8 1466 878)" />
        <ellipse cx="1488" cy="856" rx="10.5" ry="15" transform="rotate(-5 1488 856)" />
        <ellipse cx="1517" cy="858" rx="11.5" ry="15" transform="rotate(6 1517 858)" />
        <ellipse cx="1534" cy="885" rx="12" ry="15" transform="rotate(-10 1534 885)" />
        <path d="M1463 922c0-14 16-18 22-32 6-12 24-12 30 0 6 14 23 18 23 32 0 14-14 17-24 15-8-2-18-2-26 0-11 2-25-1-25-15z" />
      </g>
      <g fontFamily="Liberation Sans" fontWeight="700" fill="#e3e3e3">
        <text x="1348" y="937" fontSize="71" letterSpacing="-1">Bai</text>
        <text x="1482" y="931" fontSize="40" fill="#a0a0a0" letterSpacing="-1">du</text>
        <text x="1549" y="935" fontSize="53" fontFamily="Noto Sans CJK SC">经验</text>
      </g>
      <text
        x="1347"
        y="981"
        fontFamily="Liberation Sans"
        fontSize="38.6"
        fill="#ececec"
        stroke="rgba(120,120,120,0.35)"
        strokeWidth="0.7"
      >
        jingyan.baidu.com
      </text>
    </Overlay>
  </Page>
);

export default App;
